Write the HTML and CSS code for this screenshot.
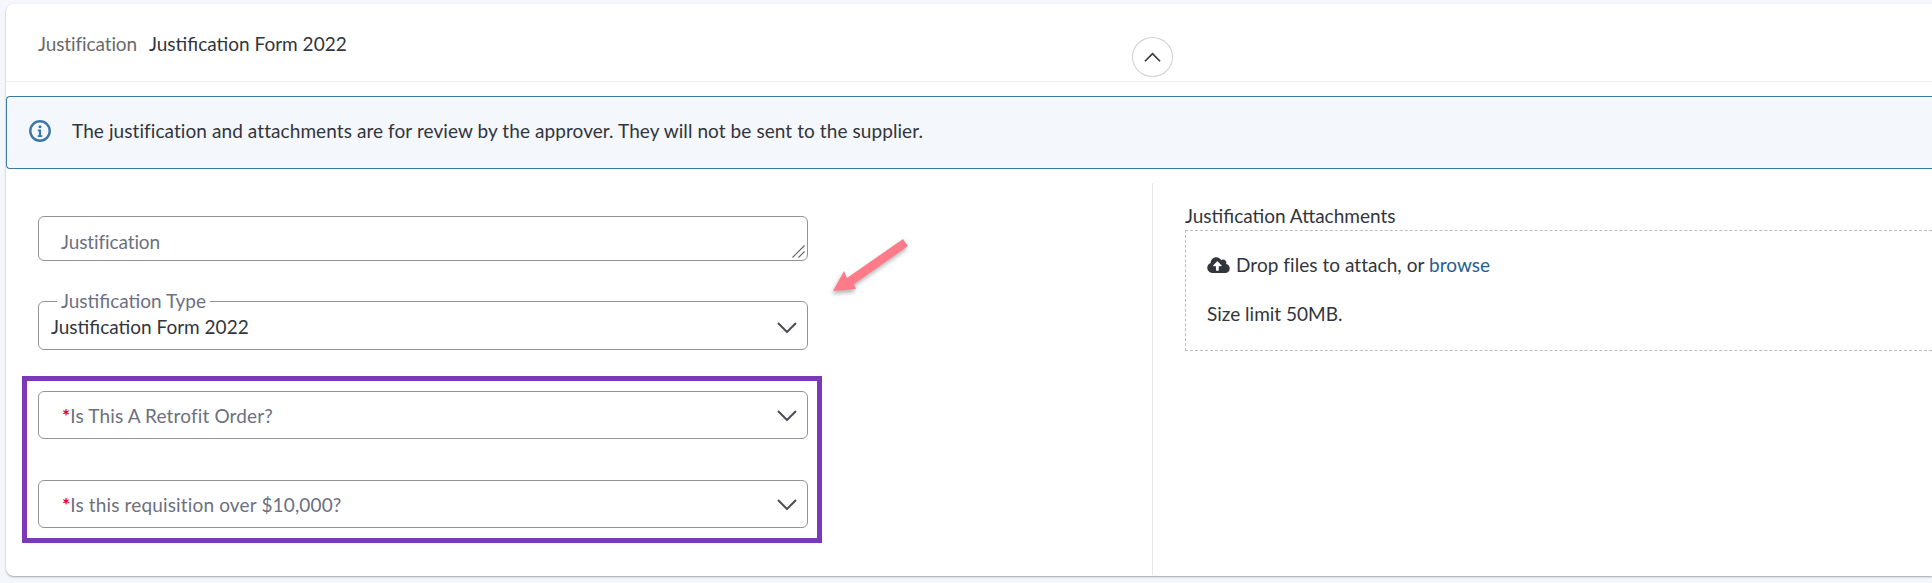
FILE: index.html
```html
<!DOCTYPE html>
<html lang="en">
<head>
<meta charset="utf-8">
<title>Justification</title>
<link rel="stylesheet" href="styles.css">
</head>
<body>
<section class="card">
  <header class="card-head">
    <div class="summary"><span class="summary-label">Justification</span><span class="summary-value">Justification Form 2022</span></div>
    <button class="collapse" type="button" aria-label="Collapse">
      <svg class="collapse-icon" viewBox="0 0 18 10"><path d="M1 9.500 9 1.500l8 8"/></svg>
    </button>
  </header>
  <div class="notice">
    <svg class="notice-icon" viewBox="0 0 22 22"><circle cx="11" cy="11" r="9.700"/><circle class="dot" cx="11" cy="6.800" r="1.500"/><path class="stem" d="M8.800 9.600h3.300v5.600h1.200v1.700H8.700v-1.700h1.200v-3.900H8.800z"/></svg>
    <p class="notice-text">The justification and attachments are for review by the approver. They will not be sent to the supplier.</p>
  </div>
  <div class="columns">
    <div class="col-form">
      <div class="text-wrap">
        <textarea class="text-field" placeholder="Justification"></textarea>
        <svg class="grip" viewBox="0 0 13 13"><path d="M.5 12.500 12.500.500M6.500 12.500l6-6"/></svg>
      </div>
      <fieldset class="select-filled">
        <legend class="select-legend">Justification Type</legend>
        <span class="select-value">Justification Form 2022</span>
        <svg class="chevron" viewBox="0 0 20 11"><path d="M1 1l9 9 9-9"/></svg>
      </fieldset>
      <div class="highlight">
        <div class="select-empty">
          <span class="select-placeholder"><span class="req">*</span>Is This A Retrofit Order?</span>
          <svg class="chevron" viewBox="0 0 20 11"><path d="M1 1l9 9 9-9"/></svg>
        </div>
        <div class="select-empty">
          <span class="select-placeholder"><span class="req">*</span>Is this requisition over $10,000?</span>
          <svg class="chevron" viewBox="0 0 20 11"><path d="M1 1l9 9 9-9"/></svg>
        </div>
      </div>
    </div>
    <div class="col-files">
      <div class="files-label">Justification Attachments</div>
      <div class="dropzone">
        <div class="drop-line">
          <svg class="cloud" viewBox="0 0 640 512"><path d="M537.6 226.6c4.1-10.7 6.4-22.4 6.4-34.6 0-53-43-96-96-96-19.7 0-38.1 6-53.3 16.2C367 64.2 315.3 32 256 32c-88.4 0-160 71.6-160 160 0 2.7.1 5.4.2 8.1C40.2 219.8 0 273.2 0 336c0 79.5 64.5 144 144 144h368c70.7 0 128-57.3 128-128 0-61.9-44-113.6-102.4-125.4zM393.4 288H328v112c0 8.8-7.2 16-16 16h-48c-8.8 0-16-7.2-16-16V288h-65.4c-14.3 0-21.4-17.2-11.3-27.3l105.4-105.4c6.2-6.2 16.4-6.2 22.6 0l105.4 105.4c10.1 10.1 2.9 27.3-11.3 27.3z"/></svg>
          <span>Drop files to attach, or <a class="browse" href="#">browse</a></span>
        </div>
        <div class="drop-limit">Size limit 50MB.</div>
      </div>
    </div>
  </div>
</section>
<svg class="arrow" viewBox="0 0 90 60"><path d="M75 1 80 8 26 46 28 51 5 53 16 33 19 40z"/></svg>
</body>
</html>
```
FILE: styles.css
```css
* { box-sizing: border-box; }
html, body { margin: 0; height: 100%; }
body {
  position: relative;
  overflow: hidden;
  padding: 4px 0 0 6px;
  background: #f4f7fb;
  font-family: "Lato", "Noto Sans", sans-serif;
  font-size: 19px;
  color: #32353c;
}
.card {
  height: 572px;
  background: #fff;
  border-radius: 8px 0 0 8px;
  box-shadow: 0 1px 2px rgba(90, 100, 110, .55);
}
.card-head {
  display: grid;
  grid-template-columns: 1126px 41px;
  height: 78px;
  border-bottom: 1px solid #eeeeee;
}
.summary { padding: 30px 0 0 32px; line-height: 20px; }
.summary-label { color: #6a6a6a; margin-right: 12px; letter-spacing: -.1px; }
.collapse {
  width: 41px;
  height: 40px;
  margin-top: 33px;
  padding: 0;
  background: #fff;
  border: 1px solid #cfcfcf;
  border-radius: 50%;
  display: flex;
  align-items: center;
  justify-content: center;
}
.collapse-icon { width: 17px; height: 10px; fill: none; stroke: #32353c; stroke-width: 1.7; }
.notice {
  display: flex;
  align-items: center;
  height: 73px;
  margin-top: 14px;
  padding: 0 0 3px 22px;
  background: #f4f7fb;
  border: 1px solid #3a78a5;
  border-right: 0;
  border-radius: 4px 0 0 4px;
}
.notice-icon { width: 22px; height: 22px; margin-right: 21px; flex: none; }
.notice-icon circle { fill: none; stroke: #3a78a5; stroke-width: 2.4; }
.notice-icon .dot { fill: #3a78a5; stroke: none; }
.notice-icon .stem { fill: #3a78a5; }
.notice-text { margin: 0; line-height: 20px; letter-spacing: .08px; }
.columns { display: flex; margin-top: 14px; height: 392px; }
.col-form {
  flex: none;
  width: 1147px;
  padding: 33px 0 0 32px;
  border-right: 1px solid #e8e8e8;
}
.text-wrap { position: relative; width: 770px; height: 45px; }
.text-field {
  display: block;
  width: 100%;
  height: 100%;
  padding: 14px 22px 0;
  border: 1px solid #949494;
  border-radius: 6px;
  background: #fff;
  font: inherit;
  line-height: 22px;
  letter-spacing: -.1px;
  color: #6c7080;
  outline: 0;
  resize: none;
}
.text-field::placeholder { color: #6c7080; opacity: 1; }
.grip {
  position: absolute;
  right: 3px;
  bottom: 3px;
  width: 13px;
  height: 13px;
  fill: none;
  stroke: #666;
  stroke-width: 1.1;
}
.select-filled {
  position: relative;
  width: 770px;
  height: 59px;
  margin: 30px 0 0;
  padding: 0 0 0 12px;
  border: 1px solid #949494;
  border-radius: 6px;
  min-inline-size: 0;
}
.select-legend {
  margin-left: 6px;
  padding: 0 4px;
  line-height: 20px;
  color: #6c7080;
}
.select-value { display: block; line-height: 22px; margin-top: 5px; }
.chevron {
  width: 20px;
  height: 11px;
  fill: none;
  stroke: #4b4e55;
  stroke-width: 2;
}
.select-filled .chevron { position: absolute; right: 10px; top: 11px; }
.highlight {
  width: 800px;
  height: 167px;
  margin: 26px 0 0 -16px;
  padding: 10px 9px 0 11px;
  border: 5px solid #7b38b8;
  display: flex;
  flex-direction: column;
  gap: 41px;
}
.select-empty {
  display: flex;
  align-items: center;
  justify-content: space-between;
  height: 48px;
  padding: 0 10px 0 23px;
  border: 1px solid #949494;
  border-radius: 6px;
}
.select-placeholder { color: #6c7080; letter-spacing: .15px; }
.req { color: #e3001b; font-weight: 700; }
.col-files { flex: 1; padding: 25px 0 0 32px; }
.files-label { line-height: 16px; margin-bottom: 6px; }
.dropzone {
  height: 121px;
  padding: 24px 0 0 21px;
  border: 1px dashed #bdbdbd;
  border-right: 0;
}
.drop-line { display: flex; align-items: center; gap: 6px; line-height: 20px; letter-spacing: .05px; }
.cloud { width: 23px; height: 18px; fill: #32353c; flex: none; }
.browse { color: #1f6096; text-decoration: none; }
.drop-limit { margin-top: 29px; line-height: 20px; }
.arrow {
  position: absolute;
  left: 828px;
  top: 238px;
  width: 90px;
  height: 60px;
  fill: #ff7b8a;
  filter: drop-shadow(-1px 3px 2px rgba(0,0,0,.3));
}
```
